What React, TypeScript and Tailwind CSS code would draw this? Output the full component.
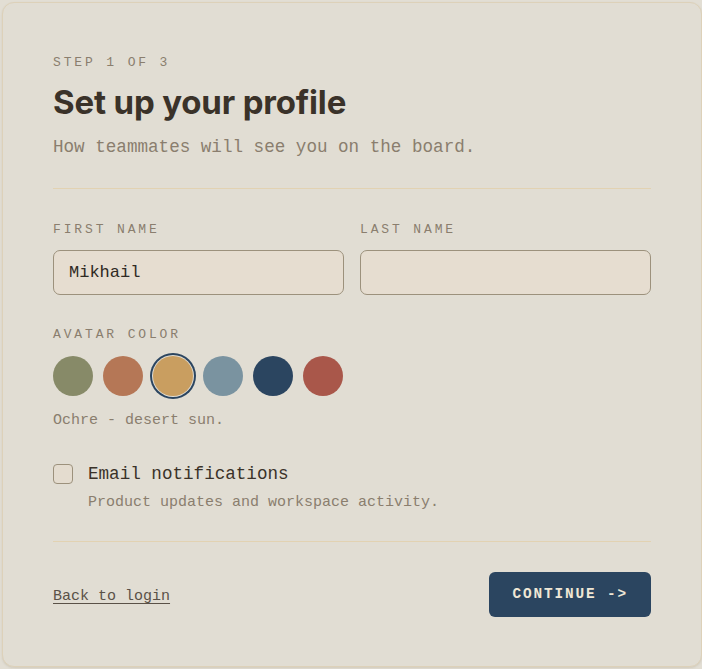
import React, { useState } from "react";

const mono = { fontFamily: '"Liberation Mono", "DejaVu Sans Mono", monospace' };
const sans = { fontFamily: 'Inter, "Noto Sans", "Liberation Sans", sans-serif' };

const colors = [
  { name: "Sage", hex: "#878a68" },
  { name: "Clay", hex: "#b57756" },
  { name: "Ochre", hex: "#c99e60" },
  { name: "Slate", hex: "#7a93a0" },
  { name: "Navy", hex: "#2b4560" },
  { name: "Brick", hex: "#a9574a" },
];

export default function App() {
  const [selected] = useState(2);
  return (
    <div className="min-h-[669px] w-full bg-[#e2ded4] pt-[2px]" style={mono}>
      <div className="ml-[2px] w-[700px] rounded-[12px] border border-[#ddd1b9] bg-[#e1ddd3] px-[50px] pt-[50px] pb-[49px] shadow-[0_1px_2px_rgba(120,100,70,0.15)]">
        <div className="text-[13px] leading-[20px] tracking-[0.22em] text-[#8a7e6e]">STEP 1 OF 3</div>
        <h1 className="mt-[9px] text-[33px] font-bold leading-[40px] tracking-[-0.005em] text-[#3a3229]" style={sans}>
          Set up your profile
        </h1>
        <p className="mt-[12px] text-[17.6px] leading-[26px] text-[#8a7e6e]">
          How teammates will see you on the board.
        </p>
        <div className="mt-[28px] h-px bg-[#e2d2b2]" />

        <div className="mt-[31px] grid grid-cols-2 gap-[16px]">
          <div>
            <label className="block text-[13px] leading-[20px] tracking-[0.22em] text-[#8a7e6e]">FIRST NAME</label>
            <div className="mt-[10px] flex h-[45px] items-center rounded-[7px] border border-[#9c917c] bg-[#e6ddd0] px-[15px] text-[17px] text-[#2f2a24]">
              Mikhail
            </div>
          </div>
          <div>
            <label className="block text-[13px] leading-[20px] tracking-[0.22em] text-[#8a7e6e]">LAST NAME</label>
            <div className="mt-[10px] flex h-[45px] items-center rounded-[7px] border border-[#9c917c] bg-[#e6ddd0] px-[15px] text-[17px] text-[#2f2a24]" />
          </div>
        </div>

        <div className="mt-[30px] text-[13px] leading-[20px] tracking-[0.22em] text-[#8a7e6e]">AVATAR COLOR</div>
        <div className="mt-[11px] flex gap-[10px]">
          {colors.map((c, i) => (
            <div
              key={c.name}
              className={
                i === selected
                  ? "h-[40px] w-[40px] rounded-full shadow-[0_0_0_1px_#e1ddd3,0_0_0_3px_#2b4560]"
                  : "h-[40px] w-[40px] rounded-full"
              }
              style={{ backgroundColor: c.hex }}
            />
          ))}
        </div>
        <div className="mt-[15px] text-[15px] leading-[20px] text-[#8a7e6e]">Ochre - desert sun.</div>

        <div className="mt-[32px] flex gap-[15px]">
          <div className="mt-[1px] h-[20px] w-[20px] shrink-0 rounded-[4px] border border-[#9c917c] bg-[#e4dccf]" />
          <div>
            <div className="text-[17.6px] leading-[22px] text-[#3a3229]">Email notifications</div>
            <div className="mt-[8px] text-[15px] leading-[20px] text-[#8a7e6e]">
              Product updates and workspace activity.
            </div>
          </div>
        </div>

        <div className="mt-[28px] h-px bg-[#e2d2b2]" />

        <div className="mt-[30px] flex items-center justify-between">
          <a href="#" className="mt-[6px] text-[15px] text-[#5a5147] underline underline-offset-[3px]">
            Back to login
          </a>
          <button className="h-[45px] rounded-[6px] bg-[#2b4560] px-[23px] text-[14.4px] font-bold tracking-[0.13em] text-[#efe7d6]">
            CONTINUE -&gt;
          </button>
        </div>
      </div>
    </div>
  );
}
